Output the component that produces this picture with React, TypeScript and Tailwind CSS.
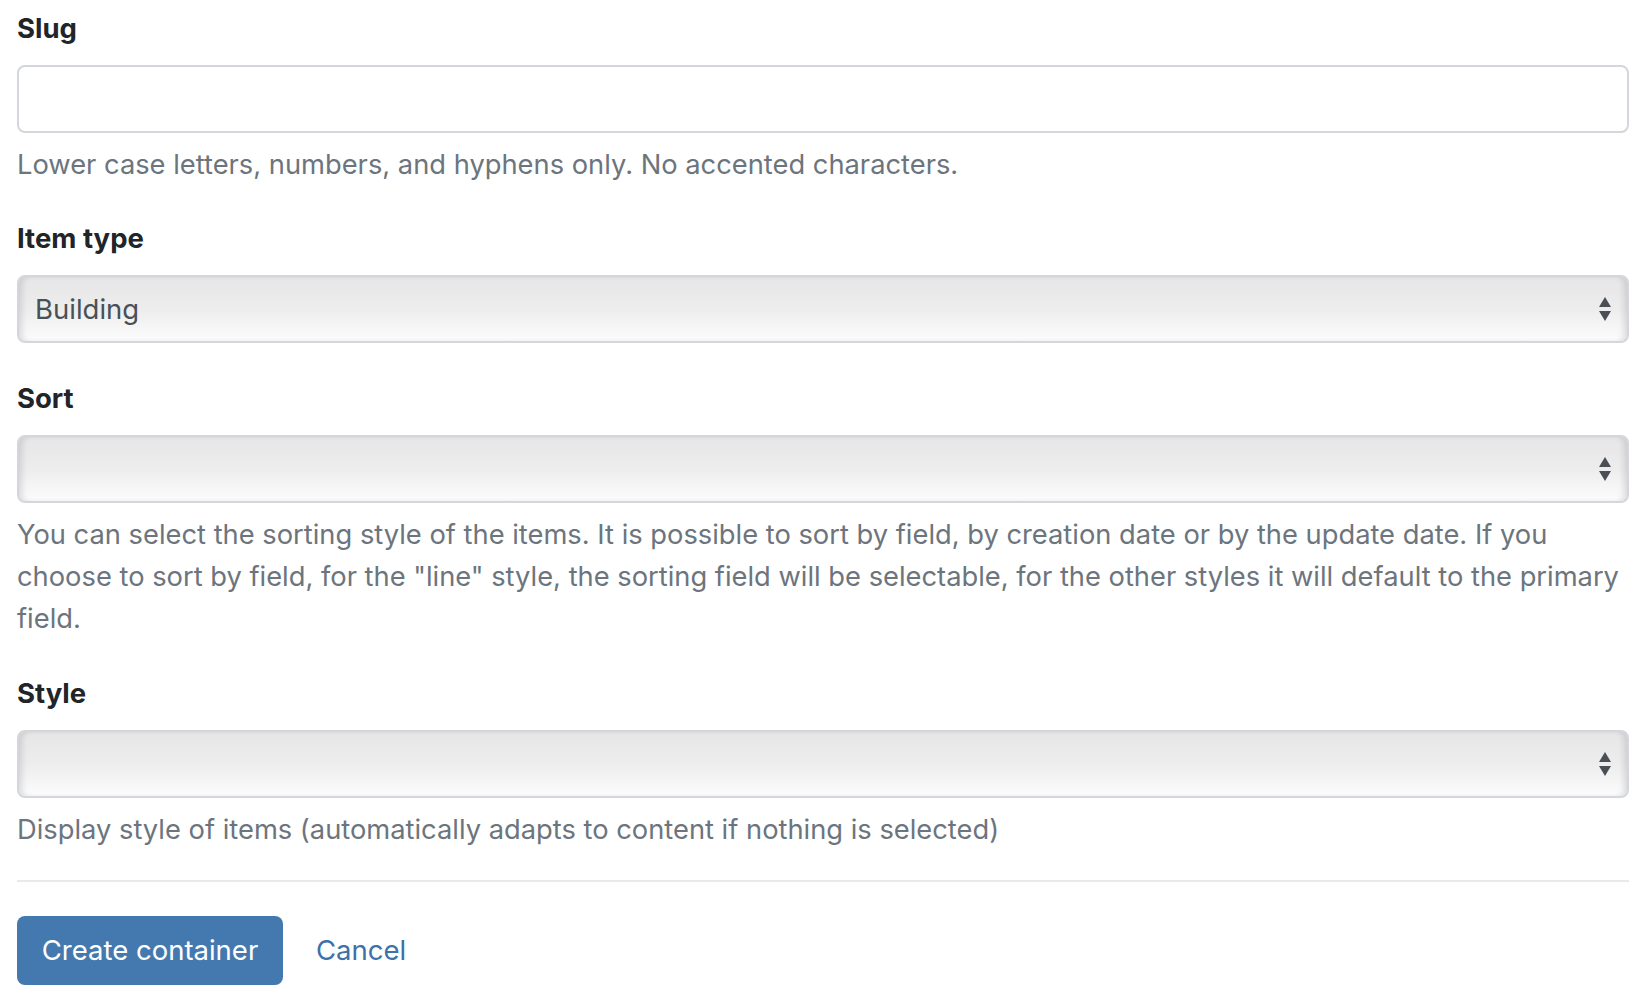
import React from "react";

const font = { fontFamily: "Inter, 'Noto Sans', sans-serif" };

function Arrows() {
  return (
    <svg width="14" height="26" viewBox="0 0 14 26" className="shrink-0">
      <path d="M7 1 L13 11 L1 11 Z" fill="#4a4f55" />
      <path d="M1 15 L13 15 L7 25 Z" fill="#4a4f55" />
    </svg>
  );
}

function Select({ value }: { value?: string }) {
  return (
    <div className="flex h-[68px] items-center justify-between rounded-[8px] border-2 border-[#d3d7dc] bg-gradient-to-b from-[#e6e6e6] via-[#ededed] to-[#fcfcfc] pl-[16px] pr-[15px] shadow-[inset_6px_0_6px_-3px_rgba(0,0,0,0.12),inset_-6px_0_6px_-3px_rgba(0,0,0,0.12)]">
      <span className="pt-[1px] text-[27.5px] text-[#495057]">{value ?? ""}</span>
      <Arrows />
    </div>
  );
}

function Label({ children }: { children: React.ReactNode }) {
  return (
    <label className="block h-[40px] text-[27.5px] font-bold leading-[40px] text-[#212529]">
      {children}
    </label>
  );
}

function Help({ children }: { children: React.ReactNode }) {
  return (
    <p className="mt-[11px] text-[27.3px] leading-[42px] text-[#6c757d]">{children}</p>
  );
}

export default function App() {
  return (
    <div style={font} className="min-h-[1000px] bg-white px-[17px] pt-[8px]">
      <div className="mb-[32px]">
        <Label>Slug</Label>
        <div className="mt-[17px] h-[68px] rounded-[8px] border-2 border-[#d3d7dc] bg-white" />
        <Help>Lower case letters, numbers, and hyphens only. No accented characters.</Help>
      </div>

      <div className="mb-[35px]">
        <Label>Item type</Label>
        <div className="mt-[17px]">
          <Select value="Building" />
        </div>
      </div>

      <div className="mb-[33px]">
        <Label>Sort</Label>
        <div className="mt-[17px]">
          <Select />
        </div>
        <Help>
          You can select the sorting style of the items. It is possible to sort by field, by creation date or by the update date. If you choose to sort by field, for the "line" style, the sorting field will be selectable, for the other styles it will default to the primary field.
        </Help>
      </div>

      <div>
        <Label>Style</Label>
        <div className="mt-[17px]">
          <Select />
        </div>
        <Help>Display style of items (automatically adapts to content if nothing is selected)</Help>
      </div>

      <div className="mt-[29px] h-[2px] bg-[#e9e9e9]" />

      <div className="mt-[34px] flex items-center gap-[33px]">
        <button className="h-[69px] w-[266px] rounded-[8px] bg-[#4479b0] text-[27.5px] text-white">
          Create container
        </button>
        <a className="text-[27.5px] text-[#3c71aa]">Cancel</a>
      </div>
    </div>
  );
}
